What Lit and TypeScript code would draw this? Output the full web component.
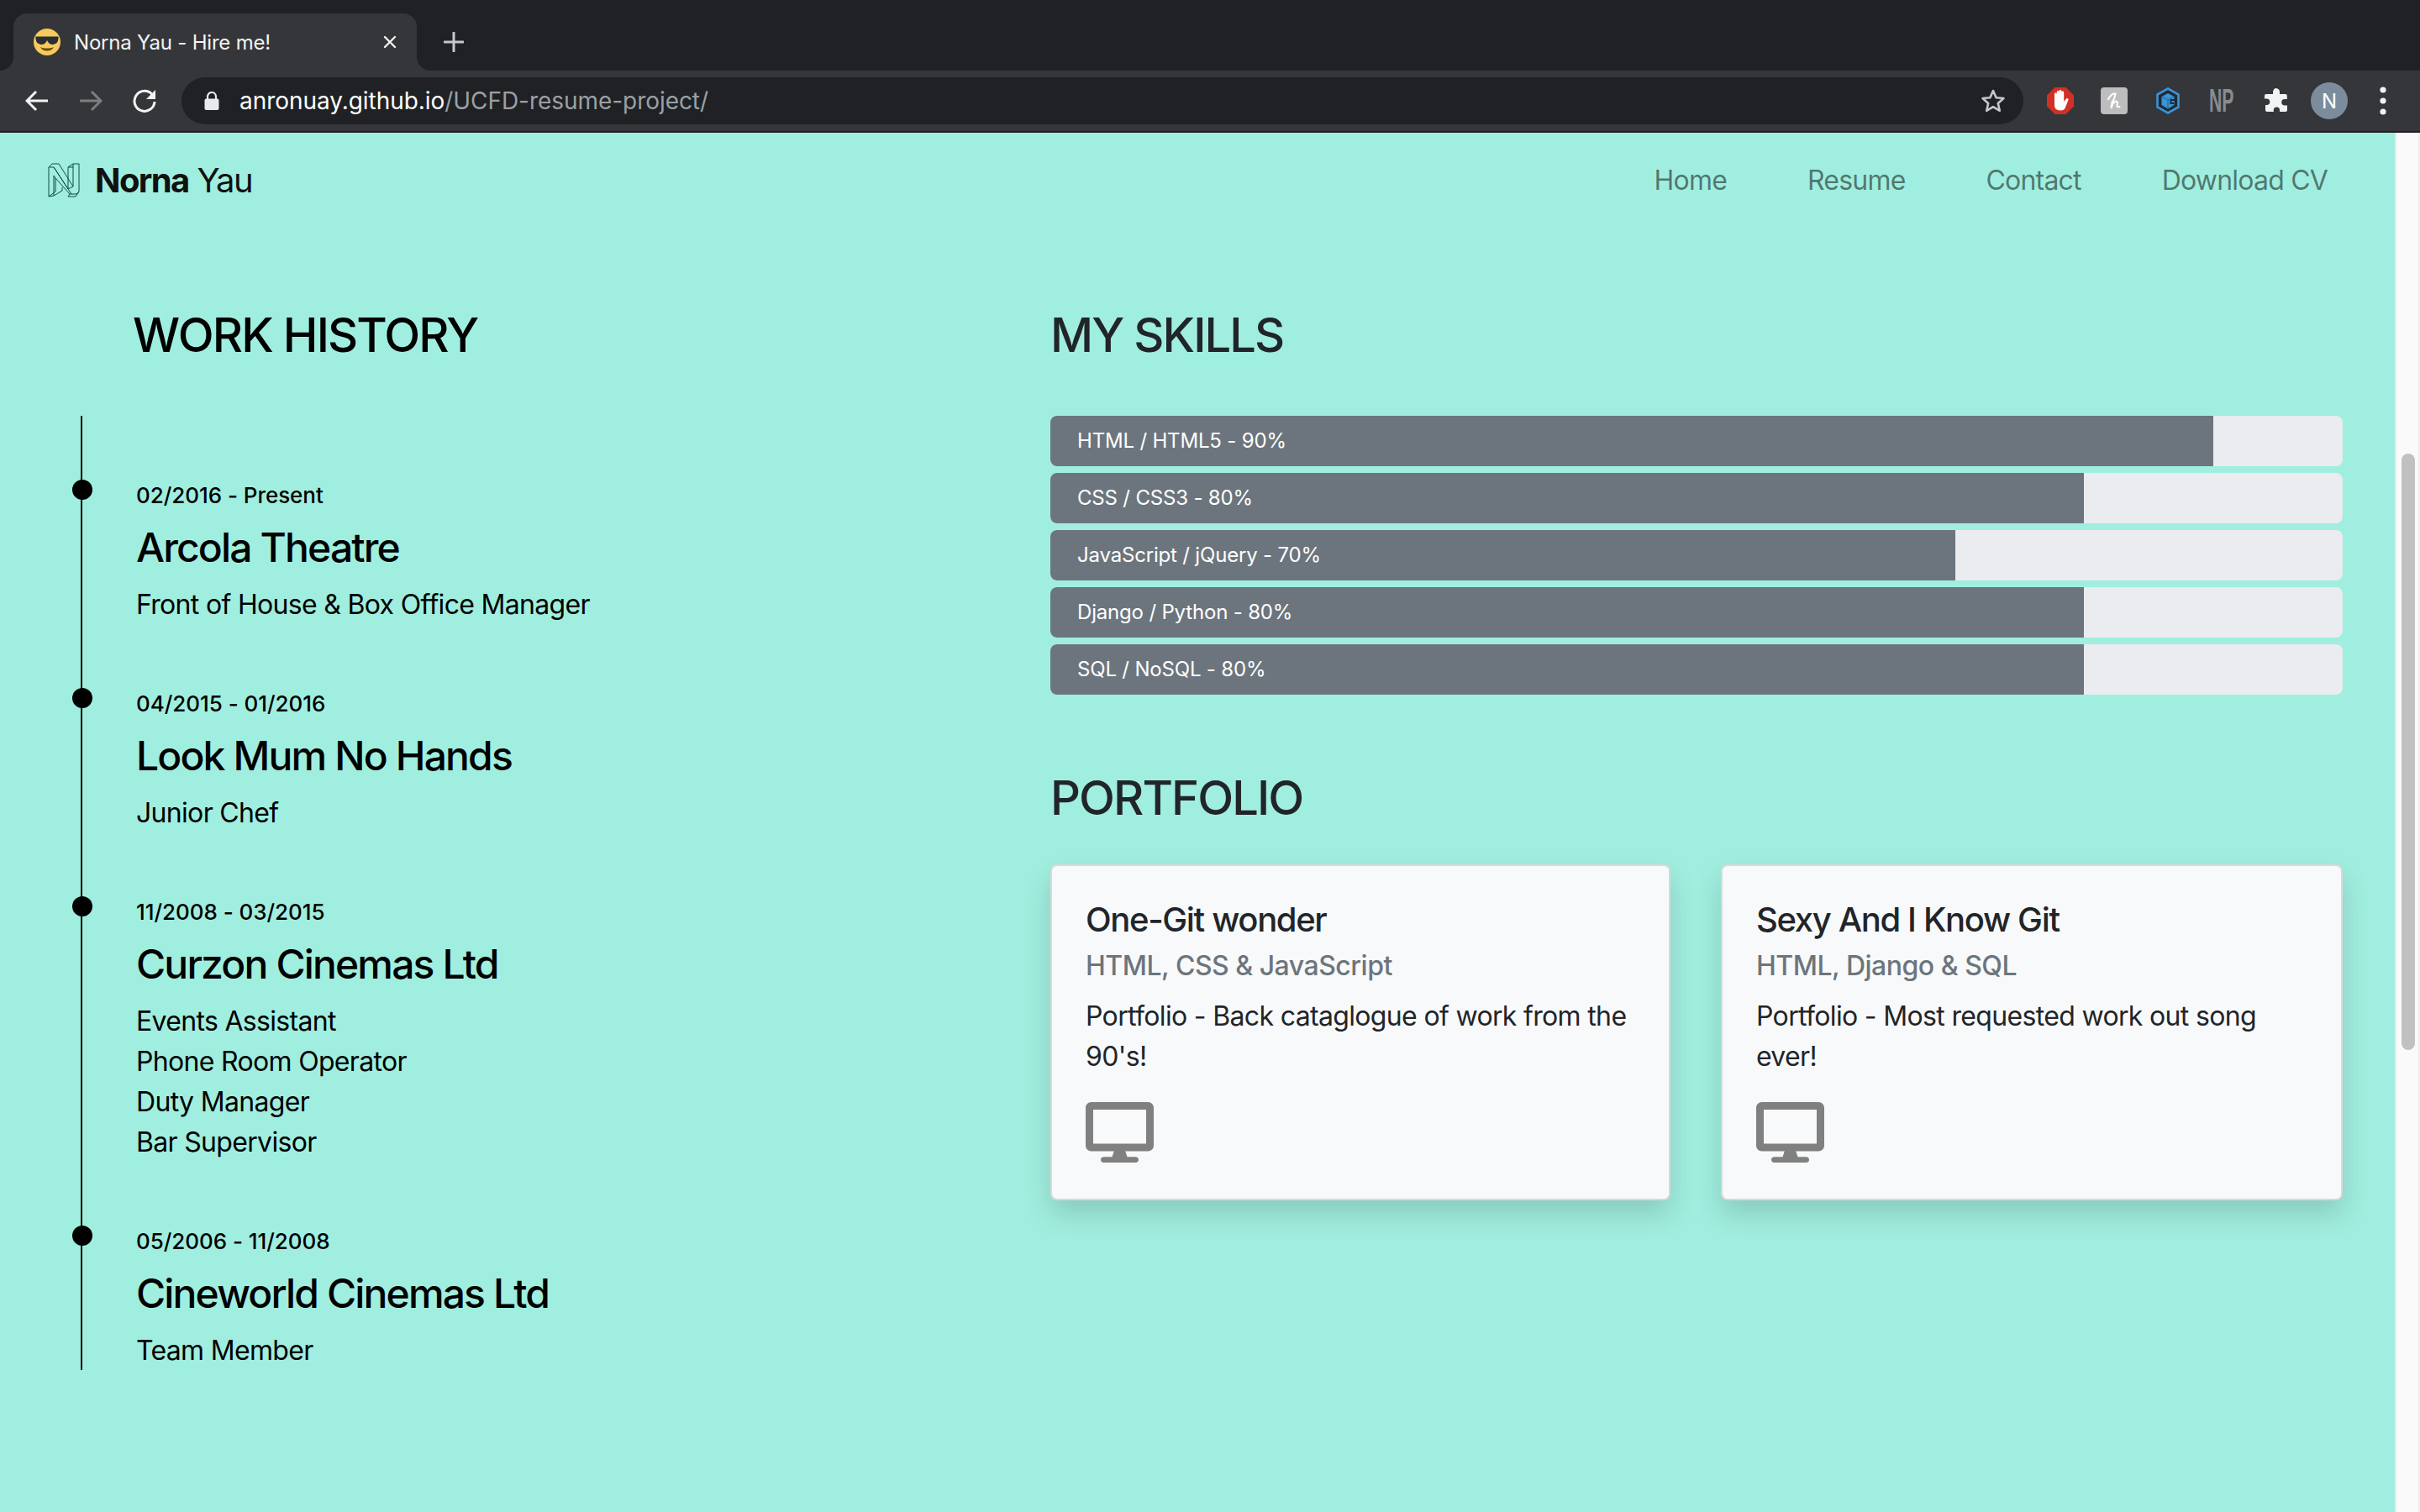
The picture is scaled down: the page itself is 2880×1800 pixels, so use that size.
import { LitElement, html, css, svg } from "lit";
import { customElement } from "lit/decorators.js";

const JOBS = [
  { date: "02/2016 - Present", name: "Arcola Theatre", roles: ["Front of House & Box Office Manager"] },
  { date: "04/2015 - 01/2016", name: "Look Mum No Hands", roles: ["Junior Chef"] },
  { date: "11/2008 - 03/2015", name: "Curzon Cinemas Ltd", roles: ["Events Assistant", "Phone Room Operator", "Duty Manager", "Bar Supervisor"] },
  { date: "05/2006 - 11/2008", name: "Cineworld Cinemas Ltd", roles: ["Team Member"] },
];
const SKILLS = [
  { label: "HTML / HTML5 - 90%", pct: 90 },
  { label: "CSS / CSS3 - 80%", pct: 80 },
  { label: "JavaScript / jQuery - 70%", pct: 70 },
  { label: "Django / Python - 80%", pct: 80 },
  { label: "SQL / NoSQL - 80%", pct: 80 },
];
const CARDS = [
  { title: "One-Git wonder", sub: "HTML, CSS & JavaScript", text: "Portfolio - Back cataglogue of work from the 90's!" },
  { title: "Sexy And I Know Git", sub: "HTML, Django & SQL", text: "Portfolio - Most requested work out song ever!" },
];
const NAV = ["Home", "Resume", "Contact", "Download CV"];

const desktop = svg`<path d="M528 0H48C21.5 0 0 21.5 0 48v320c0 26.5 21.5 48 48 48h192l-16 48h-72c-13.3 0-24 10.7-24 24s10.7 24 24 24h272c13.3 0 24-10.7 24-24s-10.7-24-24-24h-72l-16-48h192c26.5 0 48-21.5 48-48V48c0-26.5-21.5-48-48-48zm-16 352H64V64h448v288z"/>`;

@customElement("app-root")
export class AppRoot extends LitElement {
  static styles = css`
    :host { display: block; width: 2880px; height: 1800px; overflow: hidden; font-family: Inter, "Liberation Sans", sans-serif; color: #000; background: #a0eedf; }
    * { box-sizing: border-box; }
    svg { display: block; flex: none; }

    .strip { height: 84px; background: #202124; padding: 16px 0 0 16px; display: flex; align-items: flex-start; }
    .tab { position: relative; width: 480px; height: 68px; background: #35363a; border-radius: 16px 16px 0 0; display: flex; align-items: center; padding: 0 24px; color: #f1f3f4; font-size: 24px; letter-spacing: -0.2px; }
    .tab::before, .tab::after { content: ""; position: absolute; bottom: 0; width: 16px; height: 16px; }
    .tab::before { left: -16px; background: radial-gradient(circle at 0 0, #202124 15.5px, #35363a 16.5px); }
    .tab::after { right: -16px; background: radial-gradient(circle at 100% 0, #202124 15.5px, #35363a 16.5px); }
    .tab-title { margin-left: 16px; flex: 1; white-space: nowrap; }
    .plus { margin: 22px 0 0 32px; }

    .toolbar { height: 74px; background: #35363a; border-bottom: 2px solid #1f2023; display: flex; align-items: flex-start; }
    .navicons { display: flex; align-items: center; height: 56px; margin-top: 8px; padding-left: 30px; gap: 36px; }
    .omni { margin: 8px 0 0 30px; width: 2192px; height: 56px; background: #202124; border-radius: 28px; display: flex; align-items: center; padding: 0 21px 0 27px; }
    .url { margin-left: 24px; flex: 1; font-size: 28px; color: #9aa0a6; white-space: nowrap; letter-spacing: -0.05px; }
    .url b { font-weight: 400; color: #fff; }
    .exts { display: flex; align-items: center; height: 56px; margin-top: 8px; padding-left: 28px; }
    .np { width: 30px; margin: 0 35px; font: 700 38px/38px "Liberation Sans", sans-serif; color: #8a8b8d; display: block; transform: scaleX(.56); transform-origin: left center; white-space: nowrap; }
    .avatar { width: 44px; height: 44px; border-radius: 50%; background: #7b8d9c; color: #fff; font-size: 24px; display: flex; align-items: center; justify-content: center; margin-left: 26px; }

    .view { display: flex; height: 1642px; }
    .page { flex: none; width: 2850px; height: 100%; background: #a0eedf; }
    .scrollbar { flex: 1; background: #fafafa; border-left: 2px solid #e8e8e8; border-right: 2px solid #ededed; padding: 382px 4px 0 6px; }
    .thumb { height: 710px; background: #c1c1c1; border-radius: 8px; width: 16px; }

    nav { height: 110px; display: flex; align-items: center; padding: 2px 80px 0 57px; }
    .brand { display: flex; align-items: center; font-size: 40px; gap: 16px; color: #111; letter-spacing: -1.6px; }
    .brand b { font-weight: 700; }
    .links { margin-left: auto; display: flex; gap: 96px; font-size: 32px; letter-spacing: -0.8px; color: rgba(0,0,0,.5); }

    main { display: grid; grid-template-columns: 1250px 1538px; padding-top: 98px; }
    h2 { margin: 0; font-size: 56px; line-height: 67px; font-weight: 500; color: #212529; letter-spacing: -1.9px; }
    .left h2 { color: #000; padding-left: 158px; }
    .timeline { position: relative; margin: 62px 0 0 96px; border-left: 2px solid #000; padding-top: 2px; height: 1136px; }
    .job { position: relative; padding: 76px 0 1px 64px; }
    .dot { position: absolute; left: -12px; top: 74px; width: 24px; height: 24px; border-radius: 50%; background: #000; }
    .date { font-size: 26px; line-height: 34px; font-weight: 500; letter-spacing: -0.05px; }
    .name { font-size: 48px; line-height: 58px; font-weight: 500; margin: 16px 0 15px; letter-spacing: -1.85px; }
    .role { font-size: 32px; line-height: 48px; letter-spacing: -0.68px; }

    .bars { margin-top: 62px; display: flex; flex-direction: column; gap: 8px; }
    .bar { height: 60px; background: #eaecf0; border-radius: 8px; overflow: hidden; }
    .fill { height: 100%; background: #6c757d; color: #fff; font-size: 24px; letter-spacing: -0.18px; display: flex; align-items: center; padding: 0 0 1px 32px; white-space: nowrap; }
    .portfolio { margin-top: 90px; }
    .cards { margin-top: 45px; display: flex; gap: 60px; }
    .card { flex: none; width: 738px; height: 400px; background: #f8f9fa; border: 2px solid rgba(0,0,0,.125); border-radius: 8px; box-shadow: 0 16px 32px rgba(0,0,0,.15); padding: 40px; color: #212529; }
    .card:last-child { width: 740px; }
    .card-title { font-size: 40px; line-height: 48px; font-weight: 500; letter-spacing: -1.35px; }
    .card-sub { font-size: 32px; line-height: 38px; font-weight: 500; color: #6c757d; margin-top: 12px; letter-spacing: -0.5px; }
    .card-text { font-size: 32px; line-height: 48px; margin: 17px 0 0; letter-spacing: -0.66px; }
    .card svg { margin-top: 30px; fill: #808080; width: 81px; height: 72px; }
  `;

  render() {
    return html`
      <div class="strip">
        <div class="tab">
          <svg width="32" height="32" viewBox="0 0 32 32">
            <circle cx="16" cy="16" r="16" fill="#f6ca5c"/>
            <path d="M2.5 9.5 H29.5 V12 C29 17 26 19 22 19 C19 19 17 16 16 14 C15 16 13 19 10 19 C6 19 3 17 2.5 12 Z" fill="#292f33"/>
            <path d="M8 22 C11 28 21 28 24 22 C20 24 12 24 8 22 Z" fill="#664500"/>
          </svg>
          <span class="tab-title">Norna Yau - Hire me!</span>
          <svg width="16" height="16" viewBox="0 0 16 16"><path d="M2 2 L14 14 M14 2 L2 14" stroke="#f1f3f4" stroke-width="2.4" stroke-linecap="round"/></svg>
        </div>
        <svg class="plus" width="24" height="24" viewBox="0 0 24 24"><path d="M12 1 V23 M1 12 H23" stroke="#c4c7cb" stroke-width="3" stroke-linecap="round"/></svg>
      </div>
      <div class="toolbar">
        <div class="navicons">
          <svg width="28" height="28" viewBox="0 0 28 28"><path d="M27 14 H3 M13 3 L2 14 L13 25" fill="none" stroke="#f1f3f4" stroke-width="3"/></svg>
          <svg width="28" height="28" viewBox="0 0 28 28"><path d="M1 14 H25 M15 3 L26 14 L15 25" fill="none" stroke="#7d7e80" stroke-width="3"/></svg>
          <svg width="28" height="28" viewBox="0 0 28 28"><path d="M23.5 7 A12 12 0 1 0 26 15" fill="none" stroke="#f1f3f4" stroke-width="3"/><path d="M27 1 V12 H16 Z" fill="#f1f3f4"/></svg>
        </div>
        <div class="omni">
          <svg width="18" height="22" viewBox="0 0 18 22"><path d="M4 9 V6 a5 5 0 0 1 10 0 V9" fill="none" stroke="#e8eaed" stroke-width="2.2"/><rect x="0.5" y="8.5" width="17" height="13.5" rx="2" fill="#e8eaed"/></svg>
          <span class="url"><b>anronuay.github.io</b>/UCFD-resume-project/</span>
          <svg width="30" height="30" viewBox="0 0 30 30"><path d="M15 3 L18.6 11.2 L27.5 12 L20.8 18 L22.8 26.8 L15 22.2 L7.2 26.8 L9.2 18 L2.5 12 L11.4 11.2 Z" fill="none" stroke="#c4c7cb" stroke-width="2.6" stroke-linejoin="round"/></svg>
        </div>
        <div class="exts">
          <svg width="32" height="32" viewBox="0 0 32 32"><path d="M9.5 0 H22.5 L32 9.5 V22.5 L22.5 32 H9.5 L0 22.5 V9.5 Z" fill="#d23025"/><path d="M9 15 V8 a1.4 1.4 0 0 1 2.8 0 V14 V5.5 a1.4 1.4 0 0 1 2.8 0 V14 V4.5 a1.4 1.4 0 0 1 2.8 0 V14 V6 a1.4 1.4 0 0 1 2.8 0 V17 L23 13.5 a1.5 1.5 0 0 1 2.5 1.5 L21.5 25 Q20 27.5 16 27.5 Q9 27.5 9 21 Z" fill="#fff"/></svg>
          <svg style="margin-left:32px" width="32" height="32" viewBox="0 0 32 32"><rect width="32" height="32" rx="4" fill="#bdbdbd"/><path d="M9 14 Q14 6 17.5 7.5 Q17 13 13.5 18 L12.5 25 Q14 18 18 16.5 Q21 16.5 19.5 21 Q19 24 22.5 23" fill="none" stroke="#fff" stroke-width="2.2" stroke-linecap="round"/></svg>
          <svg style="margin-left:34px" width="28" height="32" viewBox="0 0 28 32"><path d="M14 1.5 L26.5 8.5 V23.5 L14 30.5 L1.5 23.5 V8.5 Z" fill="#202a33" stroke="#3a94d8" stroke-width="2.6"/><path d="M14 7 L21.5 11 V21 L14 25.5 L6.5 21 V11 Z" fill="#3a94d8"/><path d="M14 15 L21.5 11 M14 15 V25.5 M14 15 L6.5 11" stroke="#2a6da3" stroke-width="1.4" fill="none"/><path d="M22 15 H17.5 V19 H21" fill="none" stroke="#202a33" stroke-width="2"/></svg>
          <span class="np">NP</span>
          <svg width="30" height="30" viewBox="0 0 30 30"><path d="M12 1.5 a4 4 0 0 1 7 2.5 V7 H26 a2 2 0 0 1 1.8 2 V13 H25 a3.4 3.4 0 0 0 0 7.5 H28 V26 a2 2 0 0 1 -2 2 H19 V26 a3.6 3.6 0 0 0 -7.2 0 V28 H4 a2 2 0 0 1 -2 -2 V20 H3.5 a3.6 3.6 0 0 0 0 -7.6 H1 V9 a2 2 0 0 1 2 -2 H11 V4 Z" fill="#f1f3f4"/></svg>
          <div class="avatar">N</div>
          <svg style="margin-left:38px" width="8" height="34" viewBox="0 0 8 34"><circle cx="4" cy="4" r="3.6" fill="#f1f3f4"/><circle cx="4" cy="17" r="3.6" fill="#f1f3f4"/><circle cx="4" cy="30" r="3.6" fill="#f1f3f4"/></svg>
        </div>
      </div>
      <div class="view">
        <div class="page">
          <nav>
            <div class="brand">
              <svg width="40" height="42" viewBox="7 12 40 42" fill="none" stroke="#17494a" stroke-width="1" stroke-linejoin="round">
                <path d="M8 18 L12 14 H20 L37 41 V14 H44 V47 L41 50 H33 L16 31 V47 L8 53 Z"/>
                <path d="M8 18 H14 L35 50 M14 18 L31 44 V18 L37 14 M31 18 H37 M16 31 L14 28 V52 L8 53 M14 52 L24 46 V42 M33 50 L31 53 L40 53 L44 47 M31 44 L37 41"/>
              </svg>
              <span><b>Norna</b> Yau</span>
            </div>
            <div class="links">${NAV.map((n) => html`<span>${n}</span>`)}</div>
          </nav>
          <main>
            <section class="left">
              <h2>WORK HISTORY</h2>
              <div class="timeline">
                ${JOBS.map((j) => html`
                  <div class="job">
                    <div class="dot"></div>
                    <div class="date">${j.date}</div>
                    <div class="name">${j.name}</div>
                    ${j.roles.map((r) => html`<div class="role">${r}</div>`)}
                  </div>`)}
              </div>
            </section>
            <section>
              <h2>MY SKILLS</h2>
              <div class="bars">
                ${SKILLS.map((s) => html`<div class="bar"><div class="fill" style="width:${s.pct}%">${s.label}</div></div>`)}
              </div>
              <h2 class="portfolio">PORTFOLIO</h2>
              <div class="cards">
                ${CARDS.map((c) => html`
                  <div class="card">
                    <div class="card-title">${c.title}</div>
                    <div class="card-sub">${c.sub}</div>
                    <p class="card-text">${c.text}</p>
                    <svg viewBox="0 0 576 512">${desktop}</svg>
                  </div>`)}
              </div>
            </section>
          </main>
        </div>
        <div class="scrollbar"><div class="thumb"></div></div>
      </div>
    `;
  }
}
